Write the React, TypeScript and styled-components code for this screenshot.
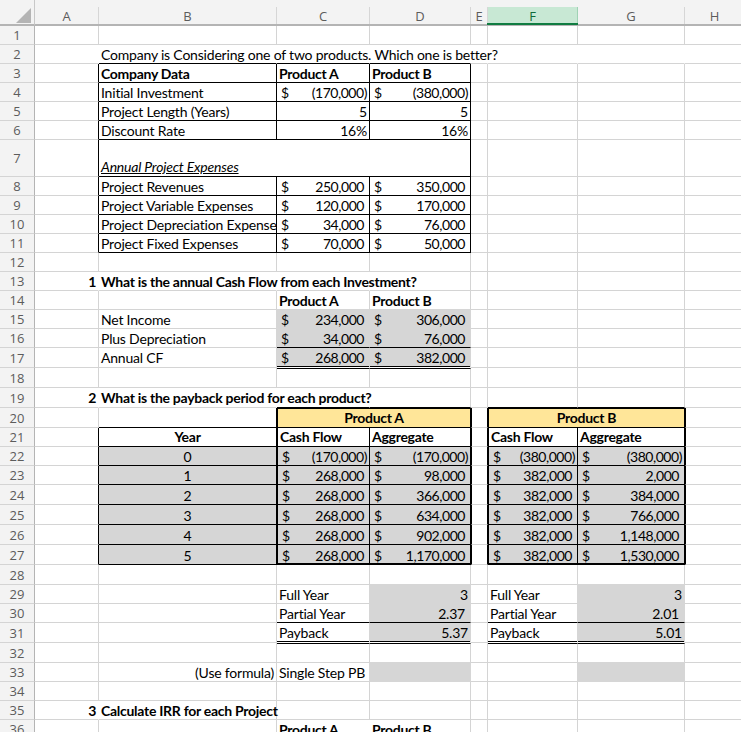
import React from "react";
import styled, {createGlobalStyle} from "styled-components";

const GlobalStyle = createGlobalStyle`
    html, body {
        margin: 0;
        padding: 0;
        background: #fff;
        overflow: hidden;
    }
`
const colWidths = [35, 64, 178, 93, 101, 17, 90, 107, 60]
const rowHeights = [26, 19, 19, 19, 19, 19, 19, 37, 19, 19, 19, 19, 19, 19, 19, 19, 19, 20, 20, 20, 20, 19, 19, 19, 20, 20, 20, 20, 20, 19, 19, 20, 20, 19, 19, 19, 19]
const cols = ["A", "B", "C", "D", "E", "F", "G", "H"]

const GRID = "#d4d4d4"
const FILL = "#d6d6d6"
const YELLOW = "#ffe699"

const Sheet = styled.div`
    width: 741px;
    height: 732px;
    overflow: hidden;
    display: grid;
    grid-template-columns: ${colWidths.map(w => w + "px").join(" ")};
    grid-template-rows: ${rowHeights.map(h => h + "px").join(" ")};
    background: #fff;
    color: #000;
    font-family: Lato, "Liberation Sans", sans-serif;
    font-size: 14px;
`
const Corner = styled.div`
    background: #f3f3f3;
    border-right: 1px solid #c8c8c8;
    border-bottom: 2px solid #b4b4b4;
    box-sizing: border-box;
    padding: 8px 2px 0 0;
    display: flex;
    justify-content: flex-end;
    svg {
        display: block;
    }
`
const ColHead = styled.div<{ $active?: boolean }>`
    position: relative;
    background: #f3f3f3;
    border-bottom: 2px solid #b4b4b4;
    box-sizing: border-box;
    display: flex;
    padding-top: 7px;
    font-family: "Open Sans", sans-serif;
    font-size: 13px;
    color: ${p => p.$active ? "#0f6b3a" : "#5c5c5c"};
    > span {
        flex: 1;
        display: flex;
        align-items: center;
        justify-content: center;
        box-sizing: border-box;
        border-right: 1px solid ${p => p.$active ? "#9fd2b4" : "#d6d6d6"};
        background: ${p => p.$active ? "#c8e8d4" : "transparent"};
    }
    ${p => p.$active ? `
    &::after {
        content: "";
        position: absolute;
        left: -1px;
        right: -1px;
        bottom: -1px;
        height: 2px;
        background: #107c41;
    }
    ` : ""}
`
const RowHead = styled.div`
    background: #f3f3f3;
    border-right: 1px solid #b4b4b4;
    border-bottom: 1px solid #d4d4d4;
    box-sizing: border-box;
    display: flex;
    align-items: center;
    justify-content: center;
    font-family: "Open Sans", sans-serif;
    font-size: 13px;
    color: #5c5c5c;
`
type Edge = "grid" | "black" | "none" | "fill"
type Bottom = Edge | "double" | "thick"

const edgeColor = (e: Edge | undefined, filled: boolean) => {
    if (e === "black") return "#000"
    if (e === "fill") return FILL
    if (e === "none") return "transparent"
    if (e === "grid") return GRID
    return filled ? "transparent" : GRID
}
const Cell = styled.div<{
    $fill?: string, $bold?: boolean, $italic?: boolean, $align?: string, $span?: number, $pad?: number, $lift?: boolean,
    $t?: boolean, $l?: boolean, $r?: Edge, $b?: Bottom
}>`
    box-sizing: border-box;
    min-width: 0;
    white-space: nowrap;
    display: flex;
    align-items: flex-end;
    line-height: 16px;
    padding: 0 ${p => p.$pad ?? 2}px ${p => p.$lift ? 1 : 0}px 2px;
    justify-content: ${p => p.$align ?? "flex-start"};
    grid-column: span ${p => p.$span ?? 1};
    background: ${p => p.$fill ?? "transparent"};
    font-weight: ${p => p.$bold ? 700 : 400};
    font-style: ${p => p.$italic ? "italic" : "normal"};
    letter-spacing: ${p => p.$bold ? -0.28 : -0.2}px;
    border-top: ${p => p.$t ? "1px solid #000" : "0"};
    border-left: ${p => p.$l ? "1px solid #000" : "0"};
    border-right: 1px solid ${p => edgeColor(p.$r, !!p.$fill)};
    border-bottom: 1px solid ${p => {
        if (p.$b === "double") return "#fff"
        if (p.$b === "thick") return "#000"
        return edgeColor(p.$b, !!p.$fill)
    }};
    ${p => p.$b === "double" || p.$b === "thick" ? "box-shadow: inset 0 -1px 0 #000;" : ""}
`
const Underlined = styled.span`
    text-decoration: underline;
    text-underline-offset: 1px;
`
const Amount = styled.span<{ $negative?: boolean }>`
    flex: 1;
    display: flex;
    justify-content: space-between;
    letter-spacing: -0.45px;
    padding: 0 ${p => p.$negative ? 0 : 3}px 0 2px;
`

type Spec = React.ComponentProps<typeof Cell> & { text?: React.ReactNode }
type Row = { open?: boolean, lift?: boolean, cells?: { [col: string]: Spec } }

const money = (value: string) => (
    <Amount $negative={value.startsWith("(")}><span>$</span><span>{value}</span></Amount>
)
// boxed table rows 3-11
const box = (b: string, c: React.ReactNode, d: React.ReactNode, bold?: boolean, align?: string): Row["cells"] => ({
    A: {$r: "black"},
    B: {text: b, $r: "black", $b: "black", $bold: bold},
    C: {text: c, $r: "black", $b: "black", $bold: bold, $align: align},
    D: {text: d, $r: "black", $b: "black", $bold: bold, $align: align},
})
const cash = (b: string, c: string, d: string, bottom?: Bottom): Row["cells"] => ({
    B: {text: b, $r: "fill"},
    C: {text: money(c), $fill: FILL, $b: bottom},
    D: {text: money(d), $fill: FILL, $b: bottom},
})
// product A and B payback rows
const payback = (year: string, a: string, aggA: string, b: string, aggB: string, last?: boolean): Row["cells"] => {
    const bottom: Bottom = last ? "thick" : "black"
    return {
        A: {$r: "black"},
        B: {text: year, $align: "center", $fill: FILL, $r: "black", $b: "black"},
        C: {text: money(a), $fill: FILL, $l: true, $r: "black", $b: bottom},
        D: {text: money(aggA), $fill: FILL, $r: "black", $b: bottom},
        E: {$l: true, $r: "black"},
        F: {text: money(b), $fill: FILL, $l: true, $r: "black", $b: bottom},
        G: {text: money(aggB), $fill: FILL, $r: "black", $b: bottom},
        H: {$l: true},
    }
}
const summary = (label: string, a: string, b: string, padA: number, padB: number, bottom?: Bottom): Row["cells"] => ({
    C: {text: label, $r: "fill", $b: bottom},
    D: {text: a, $fill: FILL, $align: "flex-end", $pad: padA, $b: bottom},
    F: {text: label, $r: "fill", $b: bottom},
    G: {text: b, $fill: FILL, $align: "flex-end", $pad: padB, $b: bottom},
})

const rows: Row[] = [
    {},
    {
        open: true, cells: {
            B: {text: "Company is Considering one of two products. Which one is better?", $b: "black"},
            C: {$b: "black"},
            D: {$b: "black"},
        }
    },
    {cells: box("Company Data", "Product A", "Product B", true)},
    {cells: box("Initial Investment", money("(170,000)"), money("(380,000)"))},
    {cells: box("Project Length (Years)", "5", "5", false, "flex-end")},
    {cells: box("Discount Rate", "16%", "16%", false, "flex-end")},
    {
        lift: true, cells: {
            A: {$r: "black"},
            B: {text: <Underlined>Annual Project Expenses</Underlined>, $italic: true, $span: 3, $r: "black", $b: "black"},
        }
    },
    {cells: box("Project Revenues", money("250,000"), money("350,000"))},
    {cells: box("Project Variable Expenses", money("120,000"), money("170,000"))},
    {cells: box("Project Depreciation Expense", money("34,000"), money("76,000"))},
    {cells: box("Project Fixed Expenses", money("70,000"), money("50,000"))},
    {},
    {
        cells: {
            A: {text: "1", $bold: true, $align: "flex-end", $r: "none"},
            B: {text: "What is the annual Cash Flow from each Investment?", $bold: true, $r: "none"},
            C: {$r: "none"},
        }
    },
    {
        cells: {
            C: {text: "Product A", $bold: true, $b: "fill"},
            D: {text: "Product B", $bold: true, $b: "fill"},
        }
    },
    {cells: cash("Net Income", "234,000", "306,000")},
    {cells: cash("Plus Depreciation", "34,000", "76,000", "black")},
    {lift: true, cells: cash("Annual CF", "268,000", "382,000", "double")},
    {cells: {C: {$t: true}, D: {$t: true}}},
    {
        lift: true, cells: {
            A: {text: "2", $bold: true, $align: "flex-end", $r: "none"},
            B: {text: "What is the payback period for each product?", $bold: true, $r: "none"},
            C: {$r: "none", $b: "black"},
            D: {$b: "black"},
            F: {$b: "black"},
            G: {$b: "black"},
        }
    },
    {
        lift: true, cells: {
            B: {$r: "black", $b: "black"},
            C: {text: "Product A", $bold: true, $fill: YELLOW, $align: "center", $span: 2, $t: true, $l: true, $r: "black", $b: "black"},
            E: {$l: true, $r: "black"},
            F: {text: "Product B", $bold: true, $fill: YELLOW, $align: "center", $span: 2, $t: true, $l: true, $r: "black", $b: "black"},
            H: {$l: true},
        }
    },
    {
        lift: true, cells: {
            A: {$r: "black"},
            B: {text: "Year", $bold: true, $align: "center", $r: "black", $b: "black"},
            C: {text: "Cash Flow", $bold: true, $l: true, $r: "black", $b: "black"},
            D: {text: "Aggregate", $bold: true, $r: "black", $b: "black"},
            E: {$l: true, $r: "black"},
            F: {text: "Cash Flow", $bold: true, $l: true, $r: "black", $b: "black"},
            G: {text: "Aggregate", $bold: true, $r: "black", $b: "black"},
            H: {$l: true},
        }
    },
    {cells: payback("0", "(170,000)", "(170,000)", "(380,000)", "(380,000)")},
    {cells: payback("1", "268,000", "98,000", "382,000", "2,000")},
    {cells: payback("2", "268,000", "366,000", "382,000", "384,000")},
    {cells: payback("3", "268,000", "634,000", "382,000", "766,000")},
    {cells: payback("4", "268,000", "902,000", "382,000", "1,148,000")},
    {cells: payback("5", "268,000", "1,170,000", "382,000", "1,530,000", true)},
    {cells: {D: {$b: "fill"}, G: {$b: "fill"}}},
    {cells: summary("Full Year", "3", "3", 2, 2)},
    {cells: summary("Partial Year", "2.37", "2.01", 5, 5, "black")},
    {lift: true, cells: summary("Payback", "5.37", "5.01", 2, 2, "double")},
    {cells: {C: {$t: true}, D: {$t: true, $b: "fill"}, F: {$t: true}, G: {$t: true, $b: "fill"}}},
    {
        cells: {
            B: {text: "(Use formula)", $align: "flex-end"},
            C: {text: "Single Step PB", $r: "fill"},
            D: {$fill: FILL},
            F: {$r: "fill"},
            G: {$fill: FILL},
        }
    },
    {},
    {
        cells: {
            A: {text: "3", $bold: true, $align: "flex-end", $r: "none"},
            B: {text: "Calculate IRR for each Project", $bold: true},
        }
    },
    {cells: {C: {text: "Product A", $bold: true, $r: "none"}, D: {text: "Product B", $bold: true}}},
]

const App: React.FC = () => {
    return (
        <>
            <GlobalStyle/>
            <Sheet>
                <Corner>
                    <svg width="16" height="16" viewBox="0 0 16 16">
                        <polygon points="0,15 15,15 15,0" fill="#b4b4b4"/>
                    </svg>
                </Corner>
                {cols.map(c => <ColHead key={c} $active={c === "F"}><span>{c}</span></ColHead>)}
                {rows.map((row, i) => {
                    let skip = 0
                    return (
                        <React.Fragment key={i}>
                            <RowHead>{i + 1}</RowHead>
                            {cols.map(col => {
                                if (skip > 0) {
                                    skip--
                                    return null
                                }
                                const {text, ...spec} = row.cells?.[col] ?? {} as Spec
                                skip = (spec.$span ?? 1) - 1
                                return (
                                    <Cell key={col} $r={row.open ? "none" : undefined} $lift={row.lift} {...spec}>{text}</Cell>
                                )
                            })}
                        </React.Fragment>
                    )
                })}
            </Sheet>
        </>
    )
}
export default App
